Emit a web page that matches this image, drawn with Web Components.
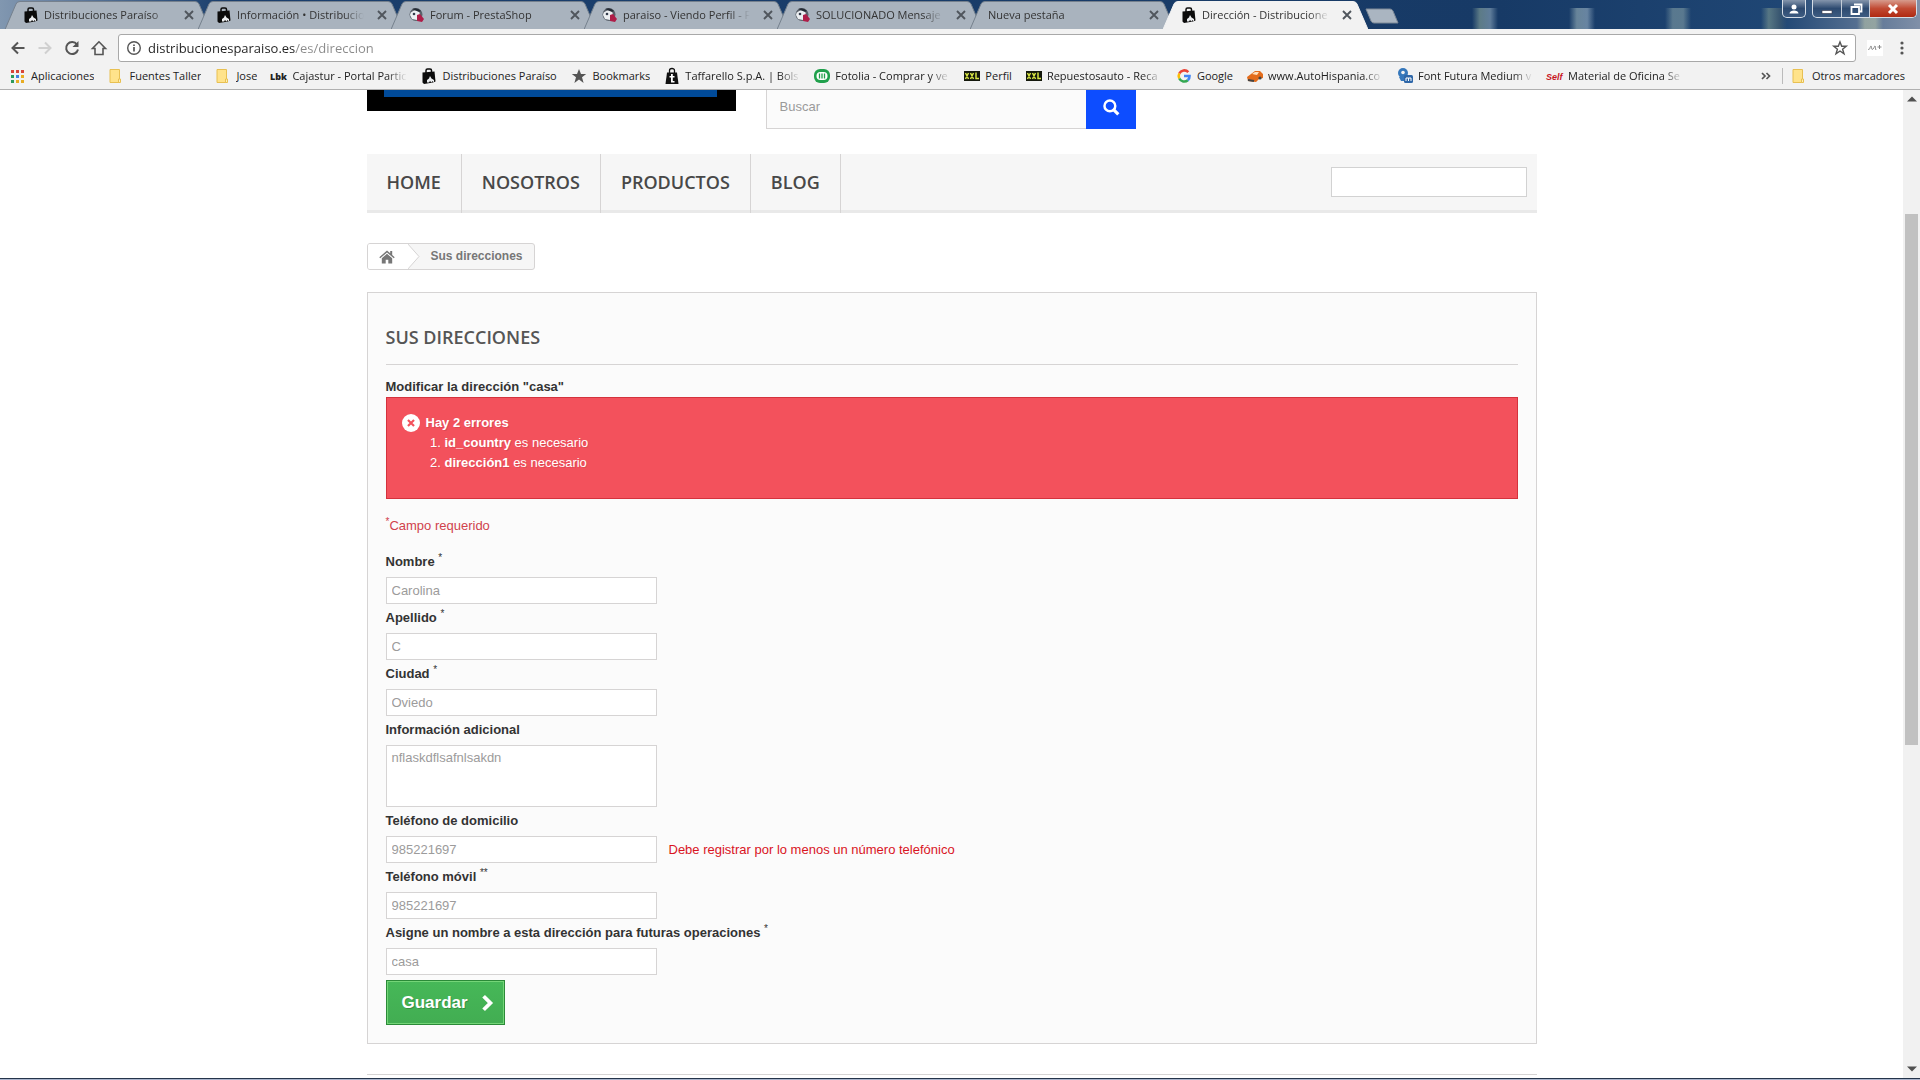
<!DOCTYPE html>
<html lang="es">
<head>
<meta charset="utf-8">
<title>Dirección - Distribuciones Paraíso</title>
<style>
  html, body { height: 100%; margin: 0; }
  body { font: 13px/18px "Liberation Sans", Arial, sans-serif; color: #777; background: #fff; overflow: hidden; }
</style>
</head>
<body>
<browser-window>
  <tab-strip slot="tabs">
    <browser-tab icon="bag">Distribuciones Paraíso</browser-tab>
    <browser-tab icon="bag">Información • Distribucio</browser-tab>
    <browser-tab icon="presta">Forum - PrestaShop</browser-tab>
    <browser-tab icon="presta">paraiso - Viendo Perfil - F</browser-tab>
    <browser-tab icon="presta">SOLUCIONADO Mensaje</browser-tab>
    <browser-tab>Nueva pestaña</browser-tab>
    <browser-tab icon="bag" active>Dirección - Distribucione</browser-tab>
  </tab-strip>
  <address-bar slot="toolbar"></address-bar>
  <bookmark-bar slot="bookmarks">
    <book-mark icon="apps">Aplicaciones</book-mark>
    <book-mark icon="folder">Fuentes Taller</book-mark>
    <book-mark icon="folder">Jose</book-mark>
    <book-mark icon="lbk" long>Cajastur - Portal Partic</book-mark>
    <book-mark icon="bag" wide>Distribuciones Paraíso</book-mark>
    <book-mark icon="star">Bookmarks</book-mark>
    <book-mark icon="tbag" long>Taffarello S.p.A. | Bols</book-mark>
    <book-mark icon="fotolia" long>Fotolia - Comprar y ve</book-mark>
    <book-mark icon="xxl">Perfil</book-mark>
    <book-mark icon="xxl" long>Repuestosauto - Reca</book-mark>
    <book-mark icon="google">Google</book-mark>
    <book-mark icon="car" long>www.AutoHispania.co</book-mark>
    <book-mark icon="font" long>Font Futura Medium v</book-mark>
    <book-mark icon="self" long>Material de Oficina Se</book-mark>
    <book-mark slot="end" icon="folder">Otros marcadores</book-mark>
  </bookmark-bar>
  <shop-header></shop-header>
  <shop-menu></shop-menu>
  <bread-crumb>Sus direcciones</bread-crumb>
  <address-panel heading="Sus direcciones">
    <error-box slot="errors"></error-box>
    <form-field label="Nombre" mark="*" value="Carolina"></form-field>
    <form-field label="Apellido" mark="*" value="C"></form-field>
    <form-field label="Ciudad" mark="*" value="Oviedo"></form-field>
    <form-field label="Información adicional" value="nflaskdflsafnlsakdn" multiline></form-field>
    <form-field label="Teléfono de domicilio" value="985221697">Debe registrar por lo menos un número telefónico</form-field>
    <form-field label="Teléfono móvil" mark="**" value="985221697"></form-field>
    <form-field label="Asigne un nombre a esta dirección para futuras operaciones" mark="*" value="casa"></form-field>
    <save-button>Guardar</save-button>
  </address-panel>
  <shop-footer></shop-footer>
</browser-window>

<script>
const ICONS = {
  bag: '<path d="M1.500 4.500L13.500 3.500L14.500 13.500L12 14.500 3 16 1.500 14.500z" fill="#0b0b0b"/><path d="M5 5V2.500q0-1.500 1.500-1.500H9q1.500 0 1.500 1.500V5" fill="none" stroke="#0b0b0b" stroke-width="1.500"/><path d="M6 14.500V12l2-1.500L9 8l1.500 2.500L13 12v2.500l-1.500-1.500-1 1.500-1.500-1.500-1 1.500z" fill="#eceef0"/>',
  presta: '<circle cx="7" cy="7.500" r="6.500" fill="#5b626b"/><path d="M1 8a6 5 0 0 1 9-4l1 4-3 5-5-1z" fill="#eceff2"/><circle cx="5" cy="7" r="1.300" fill="#333c4b"/><path d="M8 8l3-1 4 5-2 3-5-1z" fill="#ae1d48"/><path d="M3 2a8 8 0 0 1 9 2l-2 1z" fill="#242b35"/>',
  apps: '<path d="M1 2h3v3H1zM6 2h3v3H6zM11 2h3v3h-3z" fill="#d9453a"/><path d="M1 7h3v3H1zM1 12h3v3H1z" fill="#2c9a5b"/><path d="M6 7h3v3H6z" fill="#4180e3"/><path d="M11 7h3v3h-3zM6 12h3v3H6zM11 12h3v3h-3z" fill="#e8ac22"/>',
  folder: '<path d="M2 1.500h9.500v13H2z" fill="#ffe38b" stroke="#e8c052"/><path d="M10.500 11h2v3.500h-2z" fill="#fff0b8" stroke="#e8c052"/>',
  star: '<path d="M8 1l2 5h5.200l-4.200 3.300L12.600 15 8 11.500 3.400 15 5 9.300.8 6H6z" fill="#555"/>',
  lbk: '<text x="-1" y="12" font-size="9" font-weight="900" font-family="Open Sans,sans-serif" fill="#222">Lbk</text>',
  tbag: '<path d="M3 4.500h10l1.500 11.500h-13z" fill="#111"/><path d="M5.500 5V2.500a2.500 2 0 0 1 5 0V5" fill="none" stroke="#111" stroke-width="1.300"/><path d="M7 6h1.800v2h1.700v1.400H8.800V13h1.700v1.400H7v-5H5.500V8H7z" fill="#fff"/>',
  fotolia: '<rect y="1" width="16" height="14" rx="6" fill="#20a04c"/><rect x="2.500" y="4" width="11" height="8" rx="4" fill="#fff"/><path d="M5.500 5.500v5M10.500 5.500v5M8 5.500v5" stroke="#20a04c" stroke-width="1.300"/>',
  xxl: '<path d="M0 3h16v10H0z" fill="#14180c"/><path d="M1.500 5l3 6m0-6l-3 6M6.500 5l3 6m0-6l-3 6M12 4.500v6h3" stroke="#d6e443" stroke-width="1.500" fill="none"/>',
  google: '<g fill="none" stroke-width="2.600"><path d="M12.300 4.200A5.500 5.500 0 0 0 3.300 5.500" stroke="#ea4335"/><path d="M3.300 5.500a5.500 5.500 0 0 0 0 5" stroke="#fbbc05"/><path d="M3.300 10.500a5.500 5.500 0 0 0 8.500 1.700" stroke="#34a853"/><path d="M11.800 12.200A5.500 5.500 0 0 0 13.500 8H8" stroke="#4285f4"/></g>',
  car: '<path d="M0 9l4-3 4-3h5l3 3v4l-4 1-3 3-8-1z" fill="#e36c1c"/><path d="M5 6l3-2h4l-2 3z" fill="#ffe1bd"/><path d="M1 12l6 1" stroke="#444" stroke-width="2"/><circle cx="13" cy="10" r="1.600" fill="#444"/>',
  font: '<circle cx="6" cy="5" r="5" fill="#3577bb"/><circle cx="6" cy="4.500" r="1.800" fill="#f2f2f2"/><path d="M2 9h5v4H4z" fill="#3577bb"/><rect x="7" y="7" width="9" height="8" rx="1.500" fill="#2f67a8"/><path d="M9 13v-3h2.500v3M11.500 10h2.500v3" stroke="#fff" fill="none"/>',
  self: '<text x="-1" y="12" font-size="9" font-style="italic" font-weight="bold" font-family="Liberation Sans,sans-serif" fill="#c8151d">Self</text>',
  back: '<path d="M14.500 8H2.500M8 2.500L2.500 8 8 13.500" fill="none" stroke="#555" stroke-width="2"/>',
  forward: '<path d="M1.500 8h12M8 2.500L13.500 8 8 13.500" fill="none" stroke="#d0d0d0" stroke-width="2"/>',
  reload: '<path d="M13 4.500A6 6 0 1 0 14 9.500" fill="none" stroke="#555" stroke-width="2"/><path d="M14.500 1v6h-6z" fill="#555"/>',
  home: '<path d="M8 1.800L1.500 8.500H4V14.500h8V8.500h2.500z" fill="none" stroke="#555" stroke-width="1.600"/>',
  info: '<circle cx="8" cy="8" r="6.300" fill="none" stroke="#555" stroke-width="1.400"/><path d="M8 7v4.500M8 4.500v1.500" stroke="#555" stroke-width="1.700"/>',
  favorite: '<path d="M8 2l1.700 4.300h4.500l-3.600 2.900 1.400 4.600L8 11l-4 2.800 1.400-4.600L1.800 6.300h4.500z" fill="none" stroke="#555" stroke-width="1.400"/>',
  mplus: '<path d="M0 0h16v16H0z" fill="#fff"/><path d="M1 9c2 2 2-3 3-3s0 5 2 3 1-3 2-3 0 3 1 4M10.500 7h4M12.500 5v4" fill="none" stroke="#888"/>',
  dots: '<circle cx="8" cy="3" r="1.600" fill="#555"/><circle cx="8" cy="8" r="1.600" fill="#555"/><circle cx="8" cy="13" r="1.600" fill="#555"/>',
  more: '<path d="M4 5l3 3-3 3M8.500 5l3 3-3 3" fill="none" stroke="#555" stroke-width="1.700"/>',
  close: '<path d="M4 4l8 8M12 4l-8 8" stroke="#50565d" stroke-width="1.900"/>',
  user: '<circle cx="8" cy="6" r="2.500" fill="#fff"/><path d="M3.500 12.500c0-4 9-4 9 0z" fill="#fff"/>',
  min: '<path d="M3 9.500h10v3H3z" fill="#fff" stroke="#334" stroke-width=".6"/>',
  restore: '<path d="M6 3.500h7.500v7H11M3.500 6H11v7H3.500z" fill="none" stroke="#fff" stroke-width="1.800"/>',
  winclose: '<path d="M4 4l8 8M12 4l-8 8" stroke="#fff" stroke-width="3"/>',
  search: '<circle cx="7" cy="7" r="4.800" fill="none" stroke="#fff" stroke-width="2.200"/><path d="M10.500 10.500l4 4" stroke="#fff" stroke-width="2.800"/>',
  house: '<path d="M8 1.500L.3 8.300l.9 1L8 3.500l6.800 5.800.9-1L13.200 6V2h-2v2.200z" fill="#777"/><path d="M8 4.800L2.800 9.300V14.500h3.900v-3.700h2.600v3.700h3.900V9.300z" fill="#777"/>',
  error: '<circle cx="8" cy="8" r="8" fill="#fff"/><path d="M5.300 5.300l5.400 5.400M10.700 5.300l-5.400 5.400" stroke="#f3515c" stroke-width="1.900"/>',
  chevron: '<path d="M5 2l6 6-6 6" fill="none" stroke="#fff" stroke-width="3.400"/>',
  up: '<path d="M3 10.500h10L8 5.500z" fill="#505050"/>',
  down: '<path d="M3 5.500h10L8 10.500z" fill="#505050"/>'
};

/* Defines an element whose open shadow root holds the given styles and markup. */
function component(name, css, markup) {
  customElements.define(name, class extends HTMLElement {
    connectedCallback() {
      if (this.shadowRoot) return;
      const t = document.createElement('template');
      t.innerHTML = '<style>:host,*{box-sizing:border-box}button{font:inherit;border:0;background:none;padding:0}a{color:inherit;text-decoration:none}' + css + '</style>'
        + (typeof markup === 'function' ? markup(this) : markup);
      this.attachShadow({ mode: 'open' }).append(t.content.cloneNode(true));
    }
  });
}

component('ui-icon', ':host{display:inline-flex;flex:none;width:16px;height:16px}:host([large]){width:18px;height:18px}svg{width:100%;height:100%;overflow:visible}',
  el => `<svg viewBox="0 0 16 16" aria-hidden="true">${ICONS[el.getAttribute('name')] || ''}</svg>`);

component('browser-window', `
  :host{display:flex;flex-direction:column;height:100vh;background:#fff}
  .view{flex:1;min-height:0;display:flex}
  .page{flex:1;min-width:0;overflow:hidden}
  .content{width:1170px;max-width:100%;margin:0 auto}
  .task{height:2px;flex:none;background:linear-gradient(#24344a 50%,#a9b4cc 50%)}
`, `
  <slot name="tabs"></slot><slot name="toolbar"></slot><slot name="bookmarks"></slot>
  <div class="view"><main class="page"><div class="content"><slot></slot></div></main><scroll-bar></scroll-bar></div>
  <div class="task"></div>
`);

component('scroll-bar', `
  :host{display:flex;flex-direction:column;align-items:center;width:17px;background:#f1f1f1}
  ui-icon{margin:1px 0}
  .track{flex:1;width:13px;display:flex;flex-direction:column}
  .before{flex:106}.thumb{flex:531;background:#c1c1c1}.after{flex:315}
`, '<ui-icon name="up"></ui-icon><div class="track"><div class="before"></div><div class="thumb"></div><div class="after"></div></div><ui-icon name="down"></ui-icon>');

component('tab-strip', `
  :host{display:flex;align-items:flex-start;height:29px;flex:none;padding-left:5px;overflow:hidden;
    font:11px/16px "Open Sans",sans-serif;color:#333;
    background:
    linear-gradient(90deg,transparent,#8ba69c99 30%,#8fa9bd99 70%,transparent) 1472px 8px/26px 21px no-repeat,
    linear-gradient(90deg,transparent,#9bb3b999 30%,#9bb3c699 70%,transparent) 1569px 8px/26px 21px no-repeat,
    linear-gradient(90deg,transparent,#829da499 30%,#829da499 70%,transparent) 1665px 8px/26px 21px no-repeat,
    linear-gradient(90deg,transparent,#7c978f99 30%,#4c647099 70%,transparent) 1761px 8px/26px 21px no-repeat,
    linear-gradient(90deg,transparent,#b5c1a899 30%,#b5c1a899 70%,transparent) 1857px 18px/26px 11px no-repeat,
    linear-gradient(90deg,#8197b0 0,#6a83a3 50px,#1b3f6d 220px,#173a66 1500px,#1f4674 1780px,#8090a8 1920px)}
  .tabs{display:flex;padding-top:1px}
  .new{width:34px;height:16px;margin:8px 0 0 9px;display:flex}
  .new svg{width:34px;height:16px}
  .win{display:flex;gap:6px;margin-left:auto;padding-right:3px}
  .grp{display:flex;height:18px;border:1px solid #d5dde6;border-top:0;border-radius:0 0 5px 5px;overflow:hidden;background:linear-gradient(#8495ac,#2d4a70 50%,#3d5c82)}
  .grp button{display:flex;justify-content:center;align-items:center;width:28px;height:17px;border-left:1px solid #c4cdd8}
  .grp button:first-child{border-left:0}
  .grp .x{width:47px;background:linear-gradient(#d79b8d,#c14a33 50%,#b02a12)}
  .grp .u{width:22px}
`, `
  <div class="tabs"><slot></slot></div>
  <button class="new" aria-label="Nueva pestaña"><svg viewBox="0 0 34 16"><path d="M1 1h24q2 0 3 2l5 12H9q-2 0-3-2z" fill="#aab5c1" stroke="#7d8997"/></svg></button>
  <div class="win"><div class="grp"><button class="u" aria-label="Usuario"><ui-icon name="user"></ui-icon></button></div>
  <div class="grp"><button aria-label="Minimizar"><ui-icon name="min"></ui-icon></button><button aria-label="Restaurar"><ui-icon name="restore"></ui-icon></button><button class="x" aria-label="Cerrar"><ui-icon name="winclose"></ui-icon></button></div></div>
`);

component('browser-tab', `
  :host{display:grid;grid-template-columns:205px;width:205px;height:28px;margin-right:-12px;--fill:#a9b3be;--edge:#75808d}
  :host([active]){--fill:#f2f2f2;--edge:#f2f2f2;z-index:1}
  svg,.row{grid-area:1/1}
  svg{width:205px;height:28px}
  path{fill:var(--fill);stroke:var(--edge)}
  .row{display:flex;align-items:center;gap:5px;padding:0 13px 0 18px;min-width:0;z-index:1}
  a{flex:1;min-width:0;overflow:hidden;white-space:nowrap;-webkit-mask-image:linear-gradient(90deg,#000 calc(100% - 20px),transparent);mask-image:linear-gradient(90deg,#000 calc(100% - 20px),transparent)}
  button{display:flex;margin-left:5px}
`, el => `
  <svg viewBox="0 0 205 28"><path d="M0 28.500L11 3q1-2.500 4-2.500H190q3 0 4 2.500L205 28.500z"/></svg>
  <div class="row">${el.hasAttribute('icon') ? `<ui-icon name="${el.getAttribute('icon')}"></ui-icon>` : ''}<a href="#"><slot></slot></a><button aria-label="Cerrar pestaña"><ui-icon name="close"></ui-icon></button></div>
`);

component('address-bar', `
  :host{display:flex;align-items:center;flex:none;height:33px;padding:4px 10px 0 10px;gap:11px;background:#f2f2f2}
  button{display:flex}
  .box{flex:1;display:flex;align-items:center;gap:6px;height:28px;padding:0 7px;border:1px solid #a8a8a8;border-radius:3px;background:#fff}
  input{flex:1;min-width:0;height:22px;border:0;padding:0;outline:0;font:13px/22px "Open Sans",sans-serif;color:#222;
    background:linear-gradient(90deg,#222 var(--host-part),#8a8a8a var(--host-part));-webkit-background-clip:text;background-clip:text;-webkit-text-fill-color:transparent;--host-part:147px}
`, `
  <button aria-label="Atrás"><ui-icon name="back"></ui-icon></button>
  <button aria-label="Adelante"><ui-icon name="forward"></ui-icon></button>
  <button aria-label="Recargar"><ui-icon name="reload"></ui-icon></button>
  <button aria-label="Inicio"><ui-icon name="home"></ui-icon></button>
  <div class="box"><ui-icon name="info"></ui-icon><input aria-label="Dirección web" spellcheck="false" value="distribucionesparaiso.es/es/direccion"><button aria-label="Favorito"><ui-icon name="favorite"></ui-icon></button></div>
  <button aria-label="Extensión"><ui-icon name="mplus"></ui-icon></button>
  <button aria-label="Menú"><ui-icon name="dots"></ui-icon></button>
`);

component('bookmark-bar', `
  :host{display:flex;align-items:center;flex:none;height:28px;padding:0 15px 0 10px;background:#f2f2f2;border-bottom:1px solid #b0b0b0;font:11px/16px "Open Sans",sans-serif;color:#222}
  .list{display:flex;gap:14px;flex:1;min-width:0}
  .end{display:flex;align-items:center;gap:8px}
  .end button{display:flex}
  .end i{width:1px;height:16px;background:#bbb}
`, `
  <nav class="list"><slot></slot></nav><div class="end"><button aria-label="Más marcadores"><ui-icon name="more"></ui-icon></button><i></i><slot name="end"></slot></div>
`);

component('book-mark', `
  :host{display:block;flex:none}
  a{display:flex;align-items:center;gap:5px}
  span{white-space:nowrap;overflow:hidden}
  :host([wide]) span{width:115px;overflow:visible}
  :host([long]) span{width:115px;-webkit-mask-image:linear-gradient(90deg,#000 95px,transparent);mask-image:linear-gradient(90deg,#000 95px,transparent)}
`, el => `<a href="#"><ui-icon name="${el.getAttribute('icon')}"></ui-icon><span><slot></slot></span></a>`);

component('shop-header', `
  :host{display:flex;align-items:flex-start;gap:30px;padding-bottom:25px}
  .logo{width:369px;height:21px;padding:0 19px 14px 17px;background:#000}
  .logo div{height:7px;background:#004a99}
  form{display:flex;width:370px;height:39px}
  input{flex:1;min-width:0;height:39px;padding:0 13px 5px;border:1px solid #d6d4d4;border-top:0;border-right:0;border-radius:0;background:#fbfbfb;font:13px/18px "Liberation Sans",sans-serif;outline:0}
  input::placeholder{color:#9a9a9a;opacity:1}
  button{display:flex;justify-content:center;width:50px;background:#0d4dff;padding-top:8px}
`, `
  <div class="logo"><div></div></div>
  <form><input type="search" aria-label="Buscar" placeholder="Buscar"><button type="button" aria-label="Buscar"><ui-icon large name="search"></ui-icon></button></form>
`);

component('shop-menu', `
  :host{display:flex;justify-content:space-between;background:#f6f6f6;border-bottom:3px solid #e9e9e9;margin-bottom:30px;height:59px}
  nav{display:flex;font:600 18px/22px "Open Sans",sans-serif;color:#484848}
  a{display:block;padding:17px 20px;height:59px;border-right:1px solid #d6d4d4}
  input{width:196px;height:30px;margin:13px 10px 0 0;border:1px solid #d2d2d2;background:#fff;padding:0 10px;font:13px/18px "Liberation Sans",sans-serif;outline:0}
`, `
  <nav><a href="#">HOME</a><a href="#">NOSOTROS</a><a href="#">PRODUCTOS</a><a href="#">BLOG</a></nav>
  <input type="text" aria-label="Buscar en el menú">
`);

component('bread-crumb', `
  :host{display:block;margin-bottom:22px}
  nav{display:inline-flex;align-items:stretch;height:27px;border:1px solid #d6d4d4;border-radius:3px;overflow:hidden;background:#f6f6f6;font:bold 12px/24px "Liberation Sans",sans-serif;color:#777;vertical-align:top}
  a{display:flex;align-items:center;padding-left:11px;width:39px;background:#fff}
  svg{width:13px;height:25px}
  span{padding:0 11px}
`, `
  <nav><a href="#" aria-label="Inicio"><ui-icon name="house"></ui-icon></a><svg viewBox="0 0 13 25"><path d="M0-1L12 12.500 0 26z" fill="#fff" stroke="#d6d4d4"/><path d="M0 0v25" stroke="#fff" stroke-width="2"/></svg><span><slot></slot></span></nav>
`);

component('address-panel', `
  :host{display:block;background:#fbfbfb;border:1px solid #d6d4d4;padding:18px;margin-bottom:30px;line-height:18px;color:#333}
  h1{margin:0 0 13px;padding:15px 0 16px;border-bottom:1px solid #d6d4d4;font:600 18px/22px "Open Sans",sans-serif;color:#555;text-transform:uppercase}
  p{margin:0}
  .intro{font-weight:bold;margin-bottom:1px}
  .req{color:#d0424c;margin:17px 0;line-height:20px}
  sup{font-size:10px;line-height:0}
`, el => `
  <h1>${el.getAttribute('heading')}</h1>
  <p class="intro">Modificar la dirección "casa"</p>
  <slot name="errors"></slot>
  <p class="req"><sup>*</sup>Campo requerido</p>
  <form><slot></slot></form>
`);

component('error-box', `
  :host{display:flex;gap:6px;background:#f3515c;border:1px solid #d4323d;padding:15px 15px 25px 15px;color:#fff;line-height:20px;text-shadow:1px 1px rgba(0,0,0,.1)}
  b{font-weight:bold}
  p{margin:0}
  ol{margin:0;padding-left:19px}
  ui-icon{margin-top:1px}
`, `
  <ui-icon large name="error"></ui-icon>
  <div role="alert"><p><b>Hay 2 errores</b></p><ol><li><b>id_country</b> es necesario</li><li><b>dirección1</b> es necesario</li></ol></div>
`);

component('form-field', `
  :host{display:block;margin-bottom:5px}
  label{display:block;font-weight:bold;line-height:18px;margin-bottom:6px;color:#333}
  sup{font-size:10px;line-height:0;font-weight:normal}
  .row{display:flex;align-items:center;gap:12px;color:#d9141e}
  input,textarea{display:block;width:271px;height:27px;margin:0;padding:3px 5px;border:1px solid #d6d4d4;border-radius:0;background:#fff;color:#9c9b9b;font:13px/18px "Liberation Sans",sans-serif;outline:0;resize:none}
  textarea{height:62px}
`, el => `
  <label for="f">${el.getAttribute('label')}${el.hasAttribute('mark') ? ` <sup>${el.getAttribute('mark')}</sup>` : ''}</label>
  <div class="row">${el.hasAttribute('multiline') ? `<textarea id="f">${el.getAttribute('value')}</textarea>` : `<input id="f" type="text" value="${el.getAttribute('value')}">`}<slot></slot></div>
`);

component('save-button', `
  :host{display:block}
  button{display:flex;align-items:center;gap:10px;height:45px;padding:0 8px 0 15px;border:1px solid #2b8a38;box-shadow:inset 0 0 0 1px #74d578;background:linear-gradient(#46b858,#42ad52);color:#fff;font:bold 17px/21px "Liberation Sans",sans-serif;text-shadow:1px 1px rgba(0,0,0,.2)}
`, '<button type="button"><slot></slot><ui-icon large name="chevron"></ui-icon></button>');

component('shop-footer', ':host{display:block;border-top:1px solid #d6d4d4}', '');
</script>
</body>
</html>
